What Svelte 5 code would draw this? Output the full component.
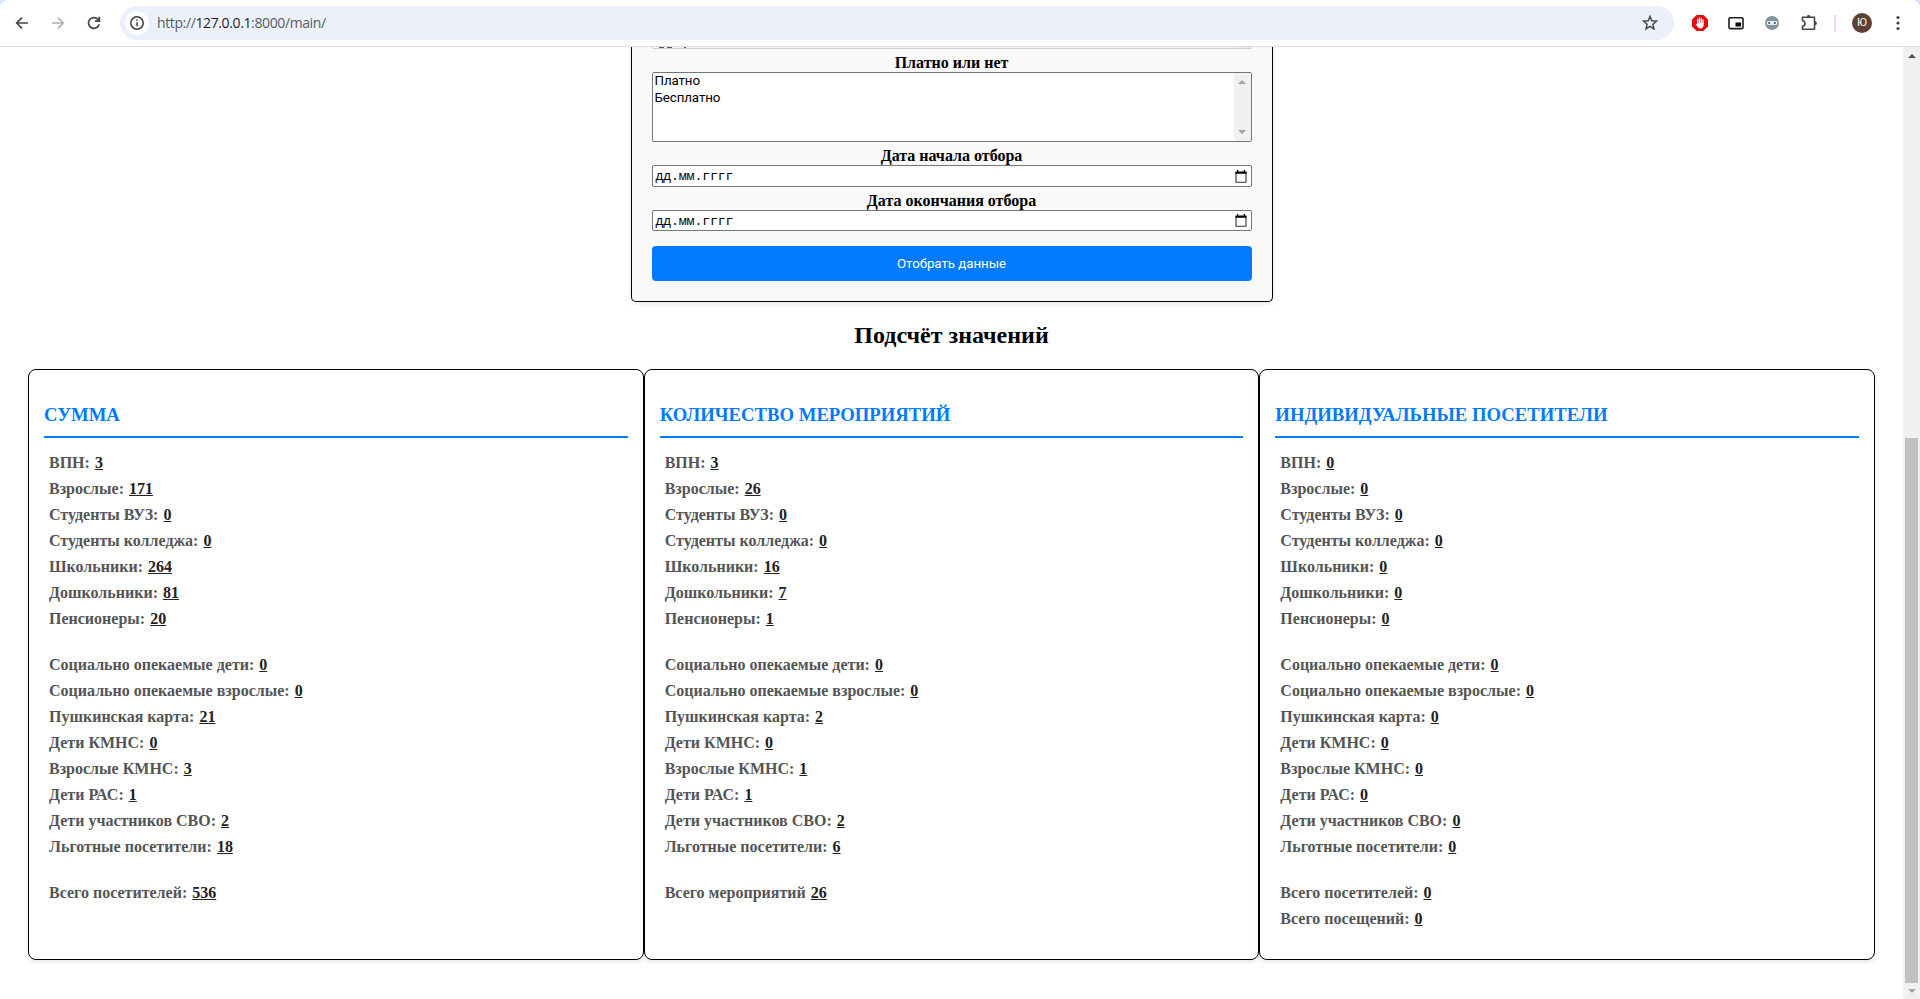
<script>
  const first = ['ВПН:', 'Взрослые:', 'Студенты ВУЗ:', 'Студенты колледжа:', 'Школьники:', 'Дошкольники:', 'Пенсионеры:'];
  const second = ['Социально опекаемые дети:', 'Социально опекаемые взрослые:', 'Пушкинская карта:', 'Дети КМНС:', 'Взрослые КМНС:', 'Дети РАС:', 'Дети участников СВО:', 'Льготные посетители:'];
  const pair = (names, values) => names.map((name, i) => ({ name, value: values[i] }));
  const cards = [
    {
      title: 'СУММА',
      groups: [
        pair(first, [3, 171, 0, 0, 264, 81, 20]),
        pair(second, [0, 0, 21, 0, 3, 1, 2, 18]),
        pair(['Всего посетителей:'], [536])
      ]
    },
    {
      title: 'КОЛИЧЕСТВО МЕРОПРИЯТИЙ',
      groups: [
        pair(first, [3, 26, 0, 0, 16, 7, 1]),
        pair(second, [0, 0, 2, 0, 1, 1, 2, 6]),
        pair(['Всего мероприятий'], [26])
      ]
    },
    {
      title: 'ИНДИВИДУАЛЬНЫЕ ПОСЕТИТЕЛИ',
      groups: [
        pair(first, [0, 0, 0, 0, 0, 0, 0]),
        pair(second, [0, 0, 0, 0, 0, 0, 0, 0]),
        pair(['Всего посетителей:', 'Всего посещений:'], [0, 0])
      ]
    }
  ];
  const dates = ['Дата начала отбора', 'Дата окончания отбора'];
</script>

<div class="window">
  <header class="frame">
    <div class="toolbar">
      <nav class="nav">
        <svg width="16" height="16" viewBox="0 0 16 16" fill="none" stroke="#45474a" stroke-width="1.7"><path d="M14 8H3M8 2.6 2.7 8 8 13.4" /></svg>
        <svg width="16" height="16" viewBox="0 0 16 16" fill="none" stroke="#b0b1b3" stroke-width="1.7"><path d="M2 8h11M8 2.6 13.3 8 8 13.4" /></svg>
        <svg width="16" height="16" viewBox="0 0 16 16" fill="none" stroke="#45474a" stroke-width="1.7"><path d="M13.2 9.2A5.4 5.4 0 1 1 12 4.4L13.2 5.7M13.4 1.8v4.4H9" /></svg>
      </nav>
      <div class="address">
        <span class="info">
          <svg width="16" height="16" viewBox="0 0 16 16" fill="none" stroke="#3c4043" stroke-width="1.5"><circle cx="8" cy="8" r="6.2" /><path d="M8 7.2v4M8 4.5v1.5" /></svg>
        </span>
        <span class="url">http://<b>127.0.0.1</b>:8000/main/</span>
        <svg class="star" width="18" height="18" viewBox="0 0 18 18" fill="none" stroke="#45474a" stroke-width="1.5"><path d="m9 2.5 1.8 4.3 4.7.4-3.6 3.1 1.1 4.6-4-2.5-4 2.5 1.1-4.6L2.500 7.200l4.700-.4z" /></svg>
      </div>
      <div class="tools">
        <svg width="18" height="18" viewBox="0 0 18 18"><path d="M5.600 1h6.800L17 5.600v6.800L12.400 17H5.600L1 12.400V5.600z" fill="#e60d12" /><g stroke="#fff" stroke-width="1.300" stroke-linecap="round" fill="none"><path d="M6.700 5.500V10M8.500 4v5M10.300 4.300v5M12 5.800V10" /></g><path d="M6.100 9h6.500v2.300q-.6 3.200-3.300 3.200-1.700 0-2.700-1.800L4.600 10.200q.3-.9 1.500.1z" fill="#fff" /></svg>
        <svg width="18" height="18" viewBox="0 0 18 18"><rect x="2" y="3.800" width="14" height="10.800" rx="1" fill="none" stroke="#1f1f1f" stroke-width="1.600" /><rect x="8.500" y="8.500" width="5.500" height="4" fill="#000" /></svg>
        <svg width="18" height="18" viewBox="0 0 18 18"><circle cx="9" cy="9" r="7" fill="#829499" /><rect x="3.500" y="6.900" width="11" height="4.200" rx="2.100" fill="#e8eff1" /><circle cx="6.200" cy="9" r="1" fill="#39435a" /><circle cx="11.800" cy="9" r="1" fill="#39435a" /></svg>
        <svg width="20" height="20" viewBox="0 0 20 20"><path d="M3.500 4.300h12v12h-12v-3.100q2.500-.2 2.500-2.700T3.500 7.700z" fill="none" stroke="#45474a" stroke-width="1.600" stroke-linejoin="round" /><path d="M7.700 4a1.900 2 0 0 1 3.800 0zM16 8.200a1.900 2 0 0 1 0 4z" fill="#45474a" /></svg>
        <i class="divider"></i>
        <span class="avatar">Ю</span>
        <svg width="4" height="16" viewBox="0 0 4 16" fill="#45474a"><circle cx="2" cy="2.500" r="1.600" /><circle cx="2" cy="8" r="1.600" /><circle cx="2" cy="13.500" r="1.600" /></svg>
      </div>
    </div>
  </header>

  <div class="viewport">
    <main>
      <form class="filter" onsubmit={(e) => e.preventDefault()}>
        <div class="previous"><i></i><i></i><i></i><b></b></div>
        <span class="label">Платно или нет</span>
        <div class="listbox">
          <div class="options"><div>Платно</div><div>Бесплатно</div></div>
          <div class="rail">
            <svg width="8" height="4" viewBox="0 0 8 4"><path d="M0 4 4 0l4 4z" fill="#a3a3a3" /></svg>
            <svg width="8" height="4" viewBox="0 0 8 4"><path d="M0 0h8L4 4z" fill="#a3a3a3" /></svg>
          </div>
        </div>
        {#each dates as label, i}
          <span class="label">{label}</span>
          <div class="date d{i}">
            <span>дд.мм.гггг</span>
            <svg width="12" height="13" viewBox="0 0 12 13"><path d="M1 2.500h10v9.700H1z" fill="none" stroke="#333" stroke-width="1.100" /><path d="M.5 1.500h11v2.300H.5zM2 0h1.300v2H2zM8.700 0H10v2H8.700z" fill="#000" /></svg>
          </div>
        {/each}
        <button type="submit">Отобрать данные</button>
      </form>

      <h2><span>Подсчёт значений</span></h2>

      <section class="cards">
        {#each cards as card}
          <article>
            <h3><span>{card.title}</span></h3>
            {#each card.groups as group}
              <ul>
                {#each group as row}
                  <li><span>{row.name}</span><u>{row.value}</u></li>
                {/each}
              </ul>
            {/each}
          </article>
        {/each}
      </section>
    </main>
    <aside class="scroll">
      <svg width="8" height="4" viewBox="0 0 8 4"><path d="M0 4 4 0l4 4z" fill="#505050" /></svg>
      <i></i>
      <svg width="8" height="4" viewBox="0 0 8 4"><path d="M0 0h8L4 4z" fill="#a3a3a3" /></svg>
    </aside>
  </div>
</div>

<style>
  :global(body) { margin: 0; background: #fff; overflow: hidden; }
  * { box-sizing: border-box; }
  svg { display: block; flex: none; }
  .window { width: 1920px; height: 999px; display: flex; flex-direction: column; font-family: "Liberation Serif", serif; }
  .frame { flex: none; height: 47px; background: #d3e3fd; }
  .toolbar { height: 47px; background: #fff; border-radius: 8px 8px 0 0; border-bottom: 1px solid #dcdddd; display: flex; align-items: center; }
  .nav { display: flex; gap: 20px; padding-left: 14px; width: 120px; }
  .address { width: 1554px; height: 34px; border-radius: 17px; background: #ecf0fa; display: flex; align-items: center; padding: 0 15px 0 5px; }
  .info { width: 24px; height: 24px; border-radius: 50%; background: #fff; display: grid; place-items: center; margin-right: 8px; }
  .url { font: 14px/20px "Open Sans", sans-serif; color: #5a5c60; white-space: nowrap; letter-spacing: -0.38px; }
  .url b { font-weight: 400; color: #1f1f1f; }
  .star { margin-left: auto; }
  .tools { display: flex; align-items: center; padding-left: 17px; }
  .tools > svg { margin-right: 18px; }
  .tools > svg:nth-child(4) { margin: 0 15px 0 0; }
  .tools > svg:last-child { margin: 0; }
  .divider { width: 2px; height: 16px; background: #d3e3fd; margin-right: 16px; }
  .avatar { width: 20px; height: 20px; border-radius: 50%; background: #5d4037; color: #fff; font: 11px/20px Roboto, sans-serif; text-align: center; margin-right: 24px; }

  .viewport { flex: 1; min-height: 0; display: flex; }
  main { width: 1903px; display: flex; flex-direction: column; align-items: center; overflow: hidden; }
  .filter { flex: none; width: 642px; height: 255px; border: 1px solid #000; border-top: 0; border-radius: 0 0 5px 5px; background: #f9f9f9; box-shadow: 0 2px 5px rgba(0, 0, 0, 0.1); padding: 0 20px; display: flex; flex-direction: column; }
  .previous { height: 2px; border: 1px solid #ccc; border-top: 0; border-radius: 0 0 3px 3px; flex: none; display: flex; gap: 3px; padding-left: 6px; }
  .previous i { width: 5px; height: 1px; background: #555; }
  .previous i:nth-child(3) { width: 2px; margin-left: 9px; }
  .previous b { width: 17px; height: 1px; margin-left: auto; background: #eaeaea; }
  .label { font-weight: 700; font-size: 16px; line-height: 18px; margin-top: 5px; text-align: center; flex: none; }
  .listbox { flex: none; height: 70px; border: 1px solid #767676; border-radius: 2px; background: #fff; display: flex; justify-content: space-between; font: 13.333px/17px Roboto, sans-serif; letter-spacing: -0.1px; color: #000; }
  .options { padding-left: 2px; margin-top: -1px; }
  .rail { width: 17px; background: #f0f0f0; display: flex; flex-direction: column; justify-content: space-between; align-items: center; padding: 7px 0; }
  .date { flex: none; height: 22px; border: 1px solid #767676; border-radius: 2px; background: #fff; display: flex; align-items: center; justify-content: space-between; padding: 0 4px 0 3px; font: 13.333px/18px "Liberation Mono", monospace; letter-spacing: -0.22px; }
  .date span { padding-top: 2px; line-height: 16px; }
  .date.d1 { height: 21px; }
  button { flex: none; margin-top: 15px; height: 35px; border: 0; border-radius: 4px; background: #007bff; color: #fff; font: 13.333px/15px Roboto, sans-serif; letter-spacing: -0.05px; padding: 0; }
  h2 { margin: 0; height: 67px; padding-top: 19px; font-size: 24px; line-height: 28px; flex: none; }
  .cards { flex: none; width: 1847px; height: 591px; display: grid; grid-template-columns: repeat(3, 1fr); }
  article { border: 1px solid #000; border-radius: 8px; padding: 0 15px; background: #fff; box-shadow: 0 2px 5px rgba(0, 0, 0, 0.1); }
  h3 { margin: 0 0 12px; padding-top: 33px; height: 68px; font-size: 18.72px; line-height: 24px; color: #007bff; border-bottom: 2px solid #007bff; white-space: nowrap; }
  ul { list-style: none; margin: 0 0 20px; padding: 0 0 0 5px; font-weight: 700; font-size: 16px; color: #555; }
  li { height: 26px; line-height: 26px; white-space: nowrap; }
  u { color: #222; margin-left: 5px; }
  .scroll { width: 17px; background: #f0f0f0; display: flex; flex-direction: column; align-items: center; padding: 7px 0 6px; }
  .scroll i { width: 13px; height: 545px; margin: auto 0 6px; background: #c1c1c1; }
</style>
